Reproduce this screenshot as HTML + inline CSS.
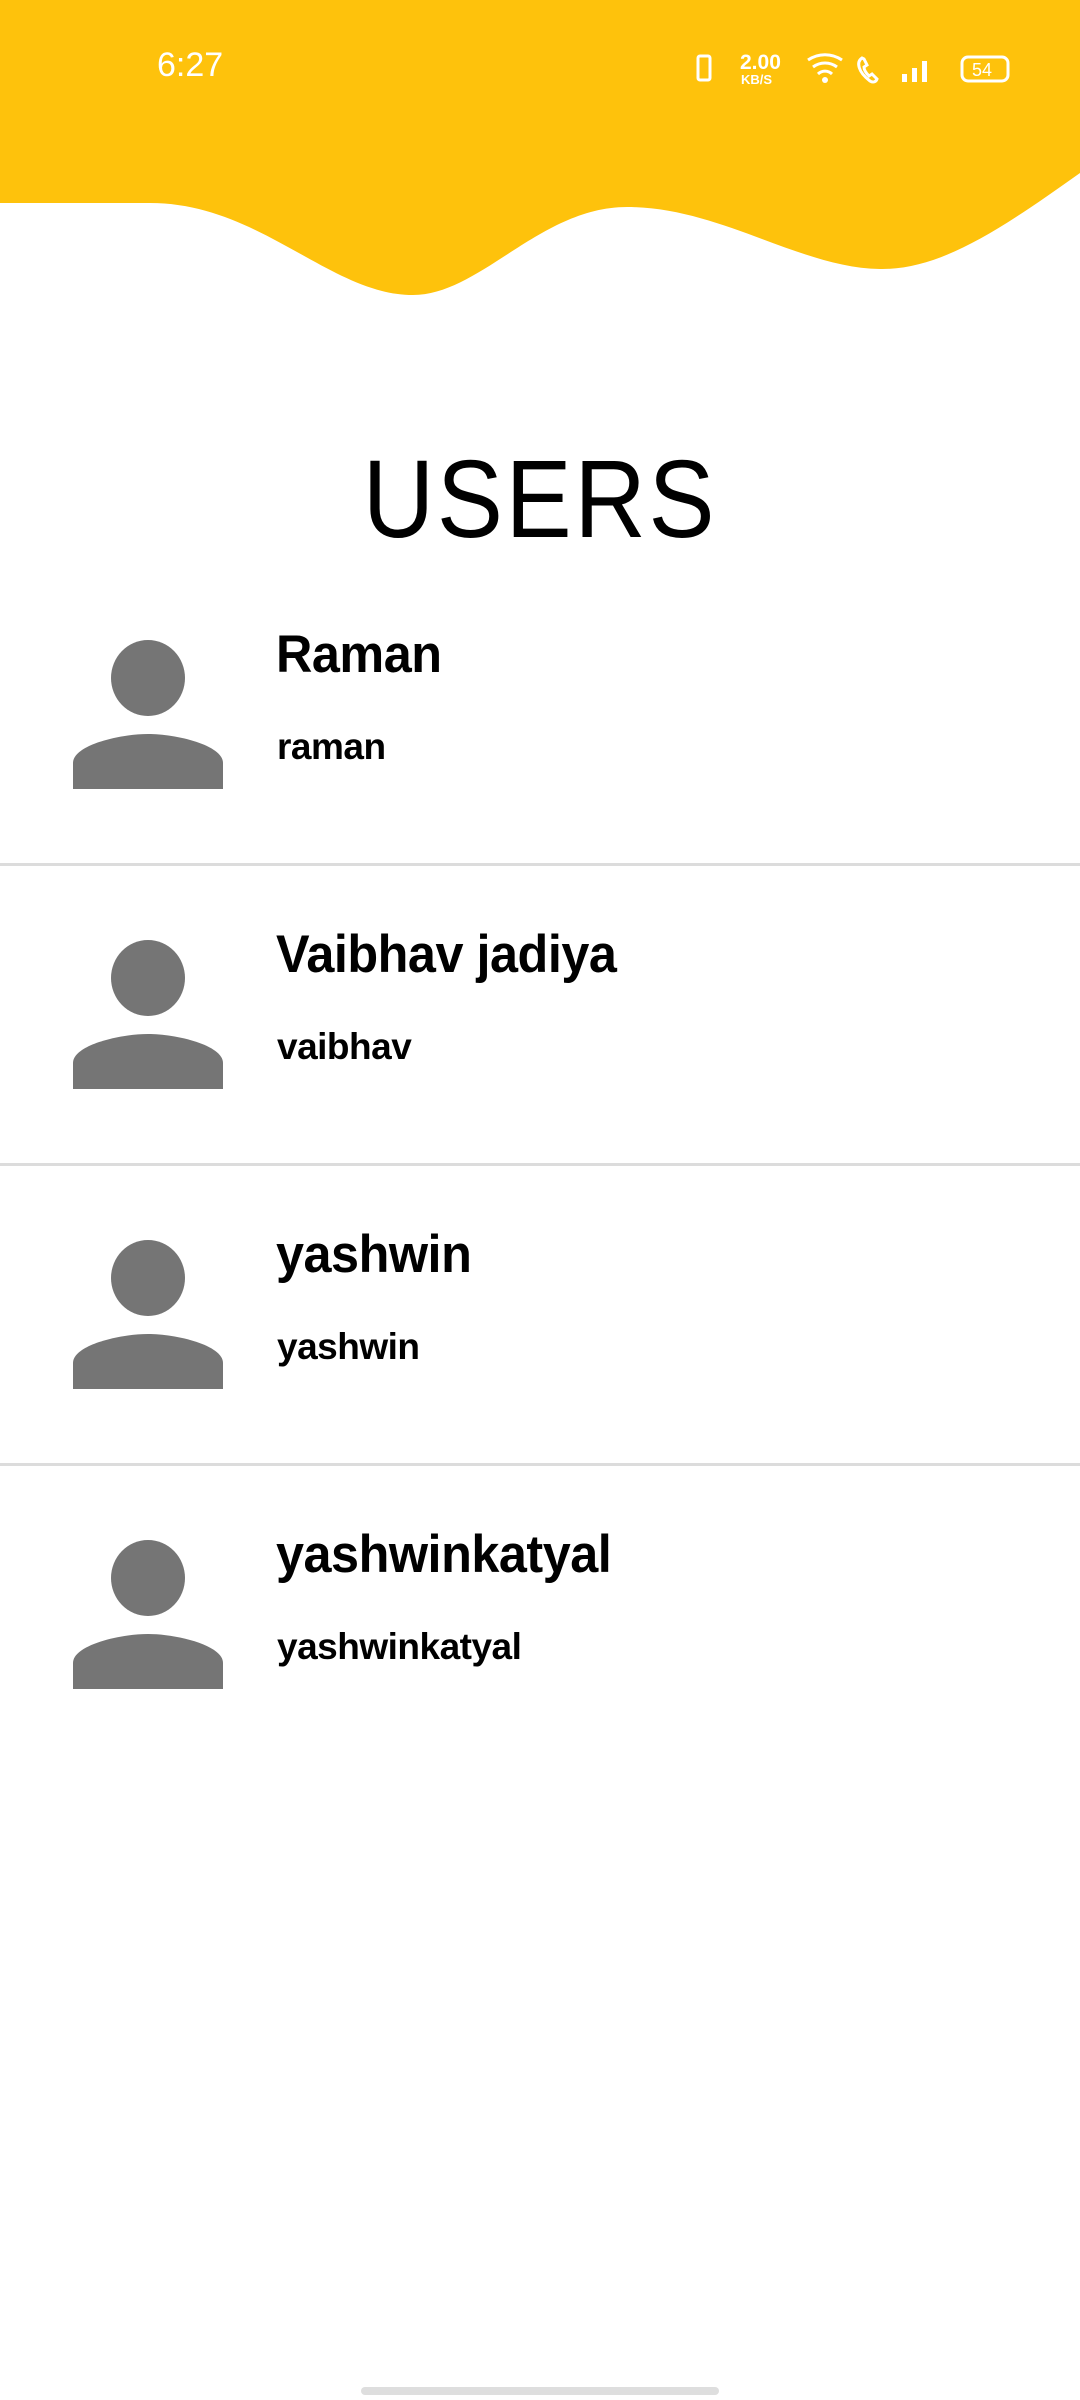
<!DOCTYPE html>
<html><head><meta charset="utf-8"><style>
body{margin:0;width:1080px;height:2400px;background:#fff;position:relative;overflow:hidden;font-family:"Liberation Sans",sans-serif}
.t{position:absolute;left:157px;top:46px;color:#fff;font-size:34px}
.title{position:absolute;left:0;width:1080px;top:436px;text-align:center;font-size:110px;letter-spacing:3px;color:#000;font-weight:normal;transform:scaleX(0.9)}
.row{position:absolute;left:0;width:1080px;height:300px}
.name{position:absolute;left:276px;top:24px;font-size:53px;font-weight:bold;letter-spacing:-0.5px;transform:scaleX(0.95);transform-origin:left}
.user{position:absolute;left:277px;top:126px;font-size:37px;font-weight:bold;letter-spacing:-0.5px}
.div{position:absolute;left:0;width:1080px;height:3px;background:#dcdcdc}
</style></head><body>
<svg width="1080" height="310" style="position:absolute;left:0;top:0">
<path d="M0 0H1080V173C1000 230 940 270 880 269C800 268 720 207 627 207C540 207 480 295 413 295C330 295 260 203 150 203L0 203Z" fill="#FEC20C"/>
<g fill="none" stroke="#fff" stroke-width="3">
<rect x="698" y="56" width="12" height="24" rx="2"/>
<rect x="962" y="57" width="46" height="24" rx="6"/>
<path d="M808 60a30 30 0 0 1 34 0M813 67a20 20 0 0 1 24 0M818 74a10 10 0 0 1 14 0"/>
<path d="M862 58c-6 4-4 14 8 23 3 2 6 1 7-2l-5-5-3 2c-3-3-5-6-5-9l3-2-3-6z"/>
</g>
<circle cx="825" cy="80" r="3" fill="#fff"/>
<g fill="#fff"><rect x="902" y="74" width="5" height="8"/><rect x="912" y="68" width="5" height="14"/><rect x="922" y="61" width="5" height="21"/></g>
<text x="740" y="69" fill="#fff" font-size="21" font-weight="bold" font-family="Liberation Sans">2.00</text>
<text x="741" y="84" fill="#fff" font-size="13" font-weight="bold" font-family="Liberation Sans">KB/S</text>
<text x="972" y="76" fill="#fff" font-size="18" font-family="Liberation Sans">54</text>
</svg>
<div class="t">6:27</div>
<div class="title">USERS</div>

<div class="row" style="top:600px">
<svg width="240" height="240" style="position:absolute;left:0;top:0"><ellipse cx="148" cy="78" rx="37" ry="38" fill="#757575"/><path d="M73 189V163C73 145 120 134 148 134C176 134 223 145 223 163V189Z" fill="#757575"/></svg>
<div class="name">Raman</div><div class="user">raman</div></div>
<div class="div" style="top:863px"></div>
<div class="row" style="top:900px">
<svg width="240" height="240" style="position:absolute;left:0;top:0"><ellipse cx="148" cy="78" rx="37" ry="38" fill="#757575"/><path d="M73 189V163C73 145 120 134 148 134C176 134 223 145 223 163V189Z" fill="#757575"/></svg>
<div class="name">Vaibhav jadiya</div><div class="user">vaibhav</div></div>
<div class="div" style="top:1163px"></div>
<div class="row" style="top:1200px">
<svg width="240" height="240" style="position:absolute;left:0;top:0"><ellipse cx="148" cy="78" rx="37" ry="38" fill="#757575"/><path d="M73 189V163C73 145 120 134 148 134C176 134 223 145 223 163V189Z" fill="#757575"/></svg>
<div class="name">yashwin</div><div class="user">yashwin</div></div>
<div class="div" style="top:1463px"></div>
<div class="row" style="top:1500px">
<svg width="240" height="240" style="position:absolute;left:0;top:0"><ellipse cx="148" cy="78" rx="37" ry="38" fill="#757575"/><path d="M73 189V163C73 145 120 134 148 134C176 134 223 145 223 163V189Z" fill="#757575"/></svg>
<div class="name">yashwinkatyal</div><div class="user">yashwinkatyal</div></div>

<div style="position:absolute;left:361px;top:2387px;width:358px;height:8px;border-radius:4px;background:#dedede"></div>
</body></html>
